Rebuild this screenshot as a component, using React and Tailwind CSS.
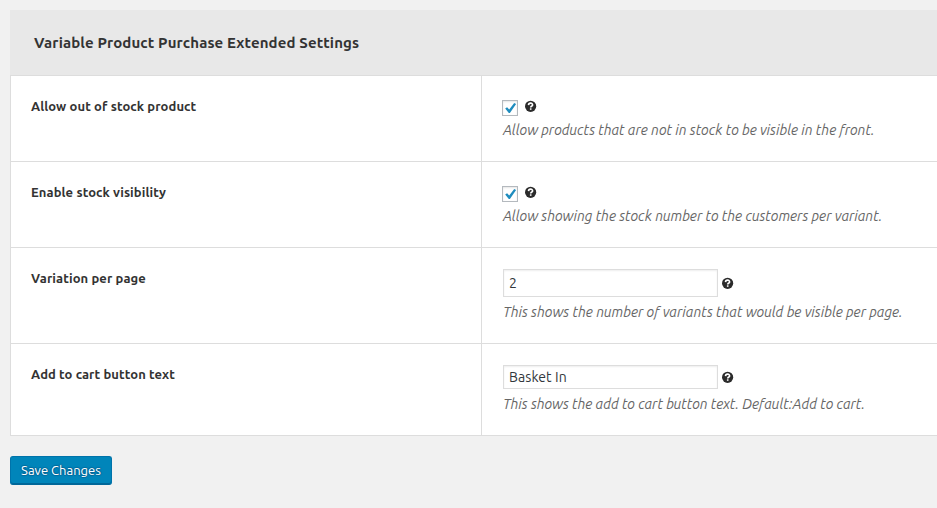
function Help({ className = "" }) {
  return (
    <svg viewBox="0 0 12 12" className={`h-3 w-3 shrink-0 ${className}`}>
      <circle cx="5.6" cy="6.3" r="5.6" fill="#2b2b2b" />
      <path d="M3.5 5.1C3.6 2.5 7.7 2.5 7.6 4.9C7.6 6 5.7 6.1 5.7 7.5" fill="none" stroke="#fff" strokeWidth="1.6" />
      <rect x="4.9" y="8.3" width="1.6" height="1.5" fill="#fff" />
    </svg>
  );
}

function Checkbox() {
  return (
    <span className="flex h-4 w-4 items-center justify-center border border-[#b4b9be] bg-white shadow-[inset_0_1px_2px_rgba(0,0,0,0.1)]">
      <svg viewBox="0 0 14 14" className="h-[14px] w-[14px] shrink-0">
        <path d="M2.2 7.6L4.1 6.2L6.2 8.6L11.2 2L13.1 3.1L6.9 12H5.8Z" fill="#1e8cbe" />
      </svg>
    </span>
  );
}

function Row({ label, height, children }) {
  return (
    <div className={`flex border-b border-[#ddd] ${height}`}>
      <div className="w-[471px] shrink-0 border-r border-[#ddd] pl-5 pt-[21px] text-[13px] leading-[18px] font-bold tracking-[0.1px]">{label}</div>
      <div className="flex-1 pl-5">{children}</div>
    </div>
  );
}

function Note({ className = "", children }) {
  return <p className={`pl-px text-[14px] leading-5 whitespace-nowrap text-[#666] italic ${className}`}>{children}</p>;
}

export default function App() {
  return (
    <div className="h-[508px] w-[937px] overflow-hidden bg-[#f1f1f1] pl-[10px] pt-[10px] font-['Ubuntu','Open_Sans',sans-serif] text-[#333]">
      <h1 className="h-[65px] bg-[#e8e8e8] pl-6 pt-[23px] text-[15px] leading-5 font-bold tracking-[0.12px]">Variable Product Purchase Extended Settings</h1>
      <div className="border-t border-l border-[#ddd] bg-white">
        <Row label="Allow out of stock product" height="h-[86px]">
          <div className="flex h-11 items-start gap-[7px] pt-6"><Checkbox /><Help /></div>
          <Note>Allow products that are not in stock to be visible in the front.</Note>
        </Row>
        <Row label="Enable stock visibility" height="h-[86px]">
          <div className="flex h-11 items-start gap-[7px] pt-6"><Checkbox /><Help /></div>
          <Note>Allow showing the stock number to the customers per variant.</Note>
        </Row>
        <Row label="Variation per page" height="h-[96px]">
          <div className="flex h-[54px] items-start gap-1 pt-[21px] pl-px"><input defaultValue="2" className="h-7 w-[215px] border border-[#ddd] px-[5px] text-[14px] text-[#32373c] shadow-[inset_0_1px_2px_rgba(0,0,0,0.07)]" /><Help className="mt-2" /></div>
          <Note className="tracking-[0.015px]">This shows the number of variants that would be visible per page.</Note>
        </Row>
        <Row label="Add to cart button text" height="h-[92px]">
          <div className="flex h-[50px] items-start gap-1 pt-[21px] pl-px"><input defaultValue="Basket In" className="h-6 w-[215px] border border-[#ddd] px-[5px] text-[14px] tracking-[0.08px] text-[#32373c] shadow-[inset_0_1px_2px_rgba(0,0,0,0.07)]" /><Help className="mt-1.5" /></div>
          <Note className="tracking-[-0.02px]">This shows the add to cart button text. Default:Add to cart.</Note>
        </Row>
      </div>
      <button className="mt-5 block h-[29px] w-[102px] rounded-[3px] border border-[#0073aa] border-b-[#006799] bg-[#0085ba] text-[13px] text-white shadow-[inset_0_-1px_0_#006799] [text-shadow:0_-1px_1px_#006799,1px_0_1px_#006799,0_1px_1px_#006799,-1px_0_1px_#006799]">Save Changes</button>
    </div>
  );
}
